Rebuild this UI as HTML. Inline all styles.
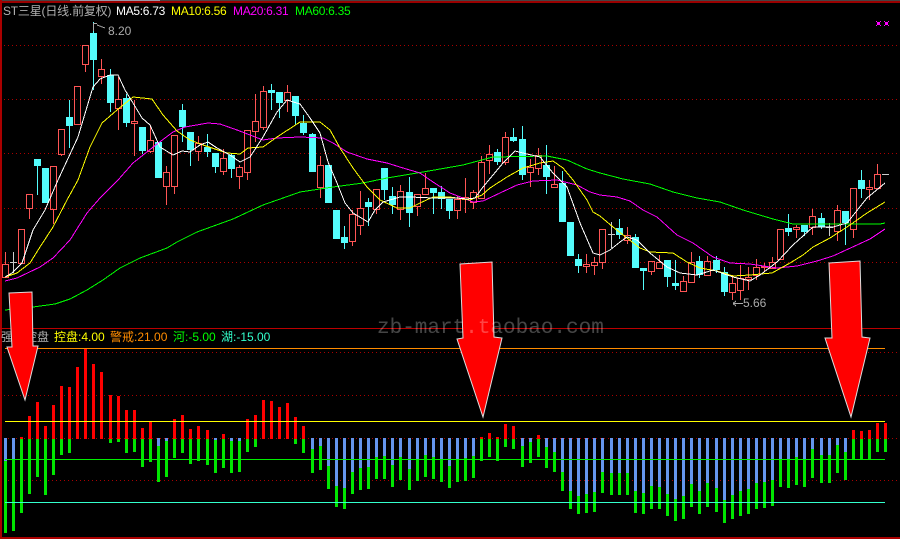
<!DOCTYPE html>
<html><head><meta charset="utf-8"><style>
html,body{margin:0;padding:0;background:#000;width:900px;height:539px;overflow:hidden}
svg{display:block;position:absolute;left:0;top:0}
text{font-family:"Liberation Sans","Noto Sans CJK SC",sans-serif;font-size:12px}
</style></head><body>
<svg width="900" height="539" viewBox="0 0 900 539" shape-rendering="crispEdges">
<rect width="900" height="539" fill="#000"/>
<!-- frame -->
<rect x="0" y="0" width="900" height="1" fill="#444"/>
<rect x="70" y="0" width="90" height="1" fill="#99a"/>
<rect x="0" y="1" width="900" height="2" fill="#900"/>
<rect x="0" y="0" width="2" height="539" fill="#a00"/>
<rect x="0" y="328" width="900" height="1" fill="#b00"/>
<rect x="0" y="537" width="900" height="2" fill="#a00"/>
<!-- dotted grid -->
<path d="M4 45.5H900M4 99.5H900M4 153.5H900M4 208.5H900M4 262.5H900M4 352.5H900M4 395.5H900M4 438.5H900M4 480.5H900" stroke="#a00" stroke-width="1" stroke-dasharray="1 3" fill="none"/>
<!-- histogram -->
<path fill="none" stroke="#6495ed" stroke-width="3" d="M5.5 438V461M13.5 438V459M158.5 438V446M166.5 438V441M215.5 438V440M231.5 438V441M239.5 438V441M312.5 438V449M320.5 438V446M328.5 438V466M336.5 438V486M344.5 438V488M352.5 438V472M360.5 438V468M368.5 438V467M376.5 438V457M384.5 438V456M392.5 438V465M400.5 438V457M409.5 438V469M417.5 438V459M425.5 438V455M433.5 438V457M441.5 438V460M449.5 438V466M457.5 438V460M465.5 438V458M473.5 438V456M522.5 438V446M530.5 438V442M546.5 438V447M554.5 438V452M562.5 438V472M570.5 438V491M578.5 438V496M586.5 438V494M594.5 438V492M602.5 438V472M611.5 438V473M619.5 438V473M627.5 438V473M635.5 438V491M643.5 438V493M651.5 438V486M659.5 438V487M667.5 438V494M675.5 438V499M683.5 438V496M691.5 438V484M699.5 438V491M707.5 438V483M716.5 438V488M724.5 438V500M732.5 438V495M740.5 438V491M748.5 438V489M756.5 438V483M764.5 438V482M772.5 438V480M780.5 438V459M788.5 438V460M796.5 438V457M804.5 438V459M812.5 438V449M821.5 438V455M829.5 438V455M837.5 438V445M845.5 438V452"/>
<path fill="none" stroke="#00e600" stroke-width="3" d="M5.5 461V533M13.5 459V531M21.5 439V513M29.5 439V494M37.5 439V477M45.5 439V495M53.5 439V475M61.5 439V455M69.5 439V453M110.5 439V443M118.5 439V442M126.5 439V453M134.5 439V452M142.5 439V467M150.5 439V462M158.5 446V482M166.5 441V477M174.5 439V458M182.5 439V453M190.5 439V464M198.5 439V461M207.5 439V465M215.5 440V473M223.5 439V468M231.5 441V473M239.5 441V472M247.5 439V452M255.5 439V447M295.5 439V444M303.5 439V453M312.5 449V473M320.5 446V470M328.5 466V489M336.5 486V507M344.5 488V509M352.5 472V494M360.5 468V490M368.5 467V489M376.5 457V479M384.5 456V479M392.5 465V487M400.5 457V480M409.5 469V490M417.5 459V481M425.5 455V477M433.5 457V479M441.5 460V482M449.5 466V488M457.5 460V482M465.5 458V481M473.5 456V478M481.5 439V461M489.5 439V457M497.5 439V461M505.5 439V447M513.5 439V449M522.5 446V467M530.5 442V463M538.5 439V457M546.5 447V468M554.5 452V472M562.5 472V491M570.5 491V509M578.5 496V514M586.5 494V513M594.5 492V512M602.5 472V493M611.5 473V495M619.5 473V495M627.5 473V495M635.5 491V513M643.5 493V514M651.5 486V509M659.5 487V509M667.5 494V516M675.5 499V521M683.5 496V519M691.5 484V507M699.5 491V514M707.5 483V507M716.5 488V512M724.5 500V523M732.5 495V519M740.5 491V516M748.5 489V514M756.5 483V509M764.5 482V508M772.5 480V506M780.5 459V487M788.5 460V488M796.5 457V485M804.5 459V487M812.5 449V478M821.5 455V483M829.5 455V483M837.5 445V473M845.5 452V480M853.5 439V459M861.5 439V459M869.5 439V459M877.5 439V452M885.5 439V452"/>
<path fill="none" stroke="#f00" stroke-width="3" d="M21.5 437V439M29.5 416V439M37.5 402V439M45.5 426V439M53.5 405V439M61.5 386V439M69.5 387V439M77.5 367V439M85.5 349V439M93.5 364V439M101.5 372V439M110.5 395V439M118.5 396V439M126.5 410V439M134.5 410V439M142.5 428V439M150.5 422V439M174.5 419V439M182.5 415V439M190.5 429V439M198.5 426V439M207.5 430V439M223.5 434V439M247.5 419V439M255.5 415V439M263.5 400V439M271.5 401V439M279.5 407V439M287.5 403V439M295.5 417V439M303.5 426V439M481.5 437V439M489.5 433V439M497.5 437V439M505.5 424V439M513.5 426V439M538.5 435V439M853.5 430V439M861.5 431V439M869.5 430V439M877.5 423V439M885.5 423V439"/>
<!-- lower solid lines -->
<path fill="none" stroke-width="1" stroke="#ff8c00" d="M5 348.5H885"/>
<path fill="none" stroke-width="1" stroke="#ffff00" d="M5 421.5H885"/>
<path fill="none" stroke-width="1" stroke="#00ee00" d="M5 459.5H885"/>
<path fill="none" stroke-width="1" stroke="#33ffcc" d="M5 502.5H885"/>
<!-- candles: cyan wicks -->
<path fill="none" stroke="#54fcfc" stroke-width="1" d="M37.5 159V195M69.5 100V148M93.5 22V90M110.5 69V112M126.5 94V127M142.5 127V154M182.5 104V142M190.5 132V166M207.5 134V157M215.5 153V173M231.5 153V178M271.5 84V110M279.5 92V118M295.5 96V125M303.5 115V135M312.5 133V172M344.5 226V249M368.5 198V226M384.5 168V200M392.5 187V214M409.5 177V227M433.5 188V214M441.5 186V209M449.5 199V219M497.5 149V165M513.5 128V142M522.5 126V180M546.5 145V194M562.5 171V222M578.5 254V273M619.5 219V239M635.5 234V268M643.5 268V290M667.5 260V287M675.5 260V290M699.5 256V278M716.5 256V273M724.5 267V296M788.5 214V236M804.5 225V236M821.5 213V229M845.5 211V245M861.5 170V198"/>
<!-- candles: cyan bodies -->
<path fill="none" stroke="#54fcfc" stroke-width="7" d="M37.5 159V166M45.5 168V203M69.5 117V126M93.5 33V60M110.5 75V103M126.5 98V123M142.5 127V151M158.5 142V178M182.5 110V127M190.5 132V150M207.5 147V152M215.5 153V167M231.5 155V169M271.5 90V93M279.5 92V103M295.5 96V116M303.5 123V133M312.5 134V172M328.5 165V203M336.5 210V239M344.5 237V243M368.5 202V207M384.5 168V190M392.5 196V205M409.5 192V213M433.5 188V193M441.5 192V199M449.5 199V211M497.5 152V162M513.5 137V141M522.5 139V175M546.5 165V177M562.5 183V222M570.5 222V256M578.5 259V266M619.5 228V235M635.5 237V268M643.5 268V271M667.5 260V277M675.5 283V286M699.5 261V275M716.5 260V270M724.5 272V292M788.5 228V232M804.5 225V232M821.5 218V227M845.5 211V223M861.5 180V189"/>
<!-- candles: red hollow -->
<path fill="none" stroke="#ff5555" stroke-width="1" d="M2.5 264.5h6v13h-6zM18.5 229.5h6v34h-6zM26.5 194.5h6v14h-6zM50.5 166.5h6v43h-6zM58.5 129.5h6v25h-6zM74.5 86.5h6v38h-6zM82.5 45.5h6v19h-6zM98.5 69.5h6v7h-6zM115.5 99.5h6v9h-6zM131.5 121.5h6v2h-6zM147.5 140.5h6v11h-6zM163.5 172.5h6v14h-6zM171.5 135.5h6v51h-6zM195.5 143.5h6v8h-6zM220.5 158.5h6v13h-6zM236.5 167.5h6v9h-6zM244.5 130.5h6v42h-6zM252.5 121.5h6v10h-6zM260.5 91.5h6v36h-6zM284.5 92.5h6v8h-6zM317.5 165.5h6v22h-6zM349.5 214.5h6v27h-6zM357.5 208.5h6v17h-6zM373.5 189.5h6v20h-6zM397.5 191.5h6v18h-6zM414.5 194.5h6v12h-6zM422.5 188.5h6v6h-6zM454.5 199.5h6v11h-6zM462.5 197.5h6v2h-6zM470.5 192.5h6v10h-6zM478.5 162.5h6v36h-6zM486.5 154.5h6v6h-6zM502.5 137.5h6v25h-6zM527.5 167.5h6v5h-6zM535.5 155.5h6v13h-6zM551.5 184.5h6v3h-6zM583.5 264.5h6v2h-6zM591.5 262.5h6v3h-6zM599.5 229.5h6v33h-6zM624.5 235.5h6v5h-6zM648.5 261.5h6v10h-6zM656.5 262.5h6v6h-6zM680.5 281.5h6v10h-6zM688.5 262.5h6v20h-6zM704.5 261.5h6v14h-6zM729.5 283.5h6v9h-6zM737.5 278.5h6v12h-6zM745.5 277.5h6v2h-6zM753.5 267.5h6v8h-6zM761.5 266.5h6v1h-6zM769.5 262.5h6v6h-6zM777.5 229.5h6v30h-6zM793.5 227.5h6v2h-6zM809.5 216.5h6v11h-6zM834.5 210.5h6v21h-6zM850.5 188.5h6v41h-6zM866.5 187.5h6v2h-6zM874.5 174.5h6v14h-6z
M5.5 252V264M29.5 208V219M53.5 209V224M61.5 154V156M85.5 64V72M101.5 59V69M101.5 76V84M118.5 77V99M118.5 108V130M134.5 100V121M134.5 123V156M150.5 125V140M150.5 151V153M166.5 166V172M166.5 186V205M174.5 186V194M198.5 136V143M198.5 151V161M223.5 149V158M223.5 171V175M239.5 165V167M239.5 176V189M247.5 172V180M255.5 94V121M255.5 131V142M263.5 86V91M263.5 127V130M287.5 85V92M287.5 100V112M320.5 156V165M320.5 187V198M352.5 210V214M352.5 241V246M360.5 191V208M360.5 225V235M376.5 209V214M400.5 185V191M400.5 209V220M417.5 206V216M425.5 173V188M425.5 194V195M457.5 196V199M457.5 210V219M465.5 178V197M465.5 199V213M473.5 190V192M473.5 202V209M481.5 156V162M489.5 145V154M489.5 160V174M505.5 132V137M505.5 162V165M530.5 159V167M530.5 172V187M538.5 148V155M538.5 168V175M554.5 166V184M586.5 254V264M586.5 266V273M594.5 257V262M594.5 265V275M602.5 262V269M627.5 227V235M627.5 240V244M651.5 271V275M659.5 255V262M683.5 276V281M691.5 252V262M707.5 256V261M707.5 275V276M732.5 275V283M732.5 292V300M740.5 265V278M740.5 290V300M748.5 267V277M748.5 279V290M756.5 259V267M756.5 275V280M764.5 263V266M764.5 267V271M772.5 257V262M796.5 225V227M796.5 229V238M812.5 209V216M812.5 227V235M837.5 205V210M837.5 231V241M853.5 229V238M869.5 180V187M869.5 189V200M877.5 164V174"/>
<!-- gray dojis -->
<path fill="none" stroke="#ccc" stroke-width="1" d="M13.5 252V273M10 262.5H17M611.5 222V248M608 234.5H615M829.5 223V236M826 227.5H833M882 174.5H889"/>
<!-- MA60 -->
<polyline fill="none" stroke="#00ff00" stroke-width="1" points="5,310 33,307 55,304 70,299 87,290 103,280 120,268 140,258 167,248 177,242 197,232 233,219 263,205 283,198 300,192 333,187 363,183 387,178 423,172 463,165 493,157 547,156 567,160 587,169 600,173 623,179 650,184 673,192 697,198 720,202 743,210 773,219 793,224 880,224 885,223"/>
<!-- MA20 -->
<polyline fill="none" stroke="#ff00ff" stroke-width="1" points="5,281 17,278 40,267 53,258 70,240 87,213 100,198 118,180 133,163 157,144 173,132 185,127 208,123 220,124 237,130 263,140 277,138 300,137 323,138 333,143 347,152 367,159 387,163 403,168 420,173 433,182 450,193 463,198 473,202 483,201 500,193 517,185 533,181 557,180 577,185 590,192 600,195 617,197 630,201 643,210 657,217 677,235 693,243 713,257 730,263 750,264 777,268 797,266 817,261 833,256 857,245 870,239 885,229"/>
<!-- MA10 -->
<polyline fill="none" stroke="#ffff00" stroke-width="1" points="5,277 17,273 30,263 40,247 53,227 67,200 78,180 90,147 102,123 117,110 133,97 152,99 163,115 177,131 190,140 203,145 227,153 240,154 248,148 263,147 277,137 297,124 300,122 320,122 330,130 340,148 353,168 367,187 380,200 397,208 410,208 420,203 433,197 450,197 470,200 482,195 490,188 507,177 523,168 540,163 553,161 563,168 573,180 587,200 593,212 600,216 613,227 627,238 640,248 650,252 673,253 687,262 700,268 717,271 733,276 750,275 772,273 790,263 803,255 813,247 830,238 850,225 867,213 885,202"/>
<!-- MA5 -->
<polyline fill="none" stroke="#ffffff" stroke-width="1" points="5,277 12,273 22,263 33,230 45,210 58,180 78,137 93,87 100,79 110,75 118,75 125,90 133,103 142,118 150,125 160,147 173,155 182,151 190,152 200,145 208,142 217,148 230,155 240,162 250,157 263,137 277,112 287,100 300,104 310,118 320,133 328,162 337,183 345,203 353,213 368,222 375,210 383,202 400,197 410,197 433,198 457,198 467,199 475,198 483,187 493,175 503,163 515,151 527,154 540,157 553,173 567,187 580,223 593,253 600,255 610,250 620,242 627,237 637,240 650,253 667,267 680,273 697,275 713,270 733,277 750,281 760,275 777,262 793,245 813,227 833,227 847,223 867,198 885,183"/>
<!-- markers -->
<path fill="none" stroke="#aaa" stroke-width="1" d="M93.5 31V23.5H97M97 25L105 28M733 303.5H743M733 303.5L736 301M733 303.5L736 306"/>
<!-- top-right marks -->
<path fill="#ff00ff" d="M877 22h3v3h-3zM885 22h3v3h-3zM876 21h1v1h-1zM880 21h1v1h-1zM876 25h1v1h-1zM880 25h1v1h-1zM884 21h1v1h-1zM888 21h1v1h-1zM884 25h1v1h-1zM888 25h1v1h-1z"/>
<!-- text -->
<g shape-rendering="auto">
<text x="3" y="15" fill="#b0b0b0" letter-spacing="-.2">ST三星(日线.前复权)</text>
<text x="116" y="15" fill="#fff" letter-spacing="-.3">MA5:6.73</text>
<text x="171" y="15" fill="#ff0" letter-spacing="-.3">MA10:6.56</text>
<text x="233" y="15" fill="#f0f" letter-spacing="-.3">MA20:6.31</text>
<text x="295" y="15" fill="#0f0" letter-spacing="-.3">MA60:6.35</text>
<text x="108" y="35" fill="#aaa">8.20</text>
<text x="743" y="307" fill="#aaa">5.66</text>
<text x="1" y="341" fill="#b0b0b0">强庄控盘</text>
<text x="54" y="341" fill="#ff0">控盘:4.00</text>
<text x="110" y="341" fill="#ff8c00">警戒:21.00</text>
<text x="173" y="341" fill="#0f0">河:-5.00</text>
<text x="221" y="341" fill="#33ffcc">湖:-15.00</text>
<!-- arrows -->
<g fill="#f00" stroke="#ddd" stroke-width="1" stroke-linejoin="miter">
<polygon points="9,293 32,292 33,346 38,346 25,400 7,347 12,347"/>
<polygon points="460,264 492,262 494,337 502,338 483,417 457,339 463,338"/>
<polygon points="829,263 860,261 862,337 870,338 851,417 825,338 832,338"/>
</g>
<text x="377" y="333" fill="rgba(255,255,255,.27)" style="font-family:'Liberation Mono',monospace;font-size:21px">zb-mart.taobao.com</text>
</g>
</svg>
</body></html>
